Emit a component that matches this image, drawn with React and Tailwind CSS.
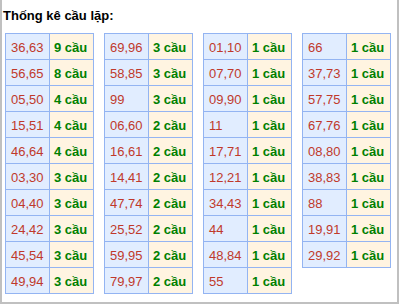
const tables = [
  [
    ['36,63', 9], ['56,65', 8], ['05,50', 4], ['15,51', 4], ['46,64', 4],
    ['03,30', 3], ['04,40', 3], ['24,42', 3], ['45,54', 3], ['49,94', 3],
  ],
  [
    ['69,96', 3], ['58,85', 3], ['99', 3], ['06,60', 2], ['16,61', 2],
    ['14,41', 2], ['47,74', 2], ['25,52', 2], ['59,95', 2], ['79,97', 2],
  ],
  [
    ['01,10', 1], ['07,70', 1], ['09,90', 1], ['11', 1], ['17,71', 1],
    ['12,21', 1], ['34,43', 1], ['44', 1], ['48,84', 1], ['55', 1],
  ],
  [
    ['66', 1], ['37,73', 1], ['57,75', 1], ['67,76', 1], ['08,80', 1],
    ['38,83', 1], ['88', 1], ['19,91', 1], ['29,92', 1],
  ],
];

function CauTable({ rows }) {
  return (
    <div className="w-[89px] self-start border-l border-t border-[#93b4f2]">
      {rows.map(([pair, count]) => (
        <div key={pair} className="flex h-[26px]">
          <div className="flex w-[44px] items-center border-r border-b border-[#93b4f2] bg-[#e1edff] pl-[5px] pt-[3px] text-[13px] text-[#c0392b]">
            {pair}
          </div>
          <div className="flex w-[44px] items-center border-r border-b border-[#93b4f2] bg-[#fff4e1] pl-[4px] pt-[3px] text-[13px] font-bold text-[#008000]">
            {count} cầu
          </div>
        </div>
      ))}
    </div>
  );
}

export default function App() {
  return (
    <div
      className="h-[304px] w-[399px] border-x-2 border-b-2 border-[#c0c0c0] bg-white"
      style={{ fontFamily: '"Liberation Sans", Arial, sans-serif' }}
    >
      <h2 className="pl-[1px] pt-[8px] text-[13px] font-bold leading-[15px] text-black">
        Thống kê cầu lặp:
      </h2>
      <div className="mt-[10px] flex gap-[10px] pl-[3px]">
        {tables.map((rows, i) => (
          <CauTable key={i} rows={rows} />
        ))}
      </div>
    </div>
  );
}
